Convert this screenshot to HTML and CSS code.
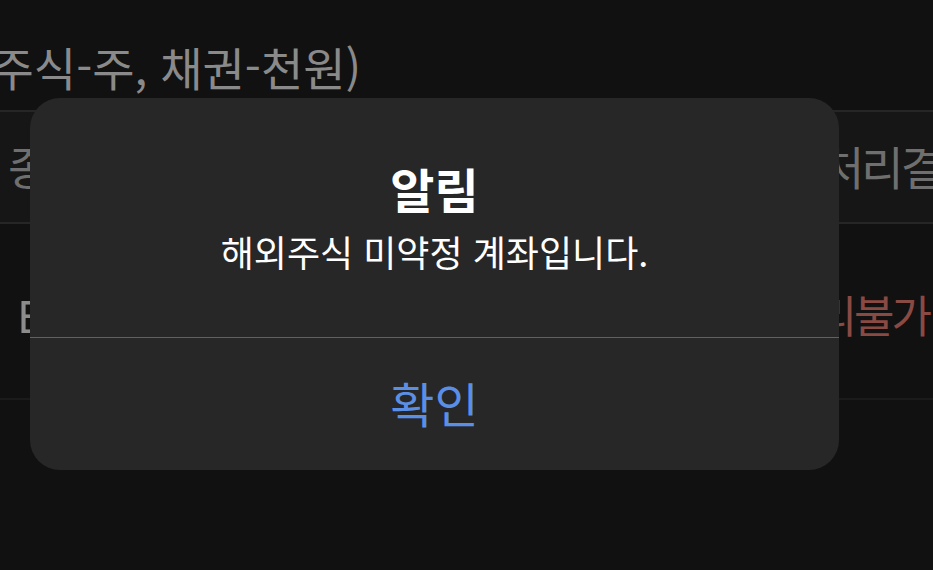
FILE: index.html
```html
<!DOCTYPE html>
<html lang="ko">
<head>
<meta charset="utf-8">
<title>알림</title>
<link rel="stylesheet" href="styles.css">
</head>
<body>
<div class="page">
  <div class="unit-line"><span class="unit-text">(주식-주, 채권-천원)</span></div>
  <div class="table-head">
    <div class="cell-left">종목명</div>
    <div class="cell-right">처리결과</div>
  </div>
  <div class="table-row">
    <div class="cell-left row-name">EWY</div>
    <div class="cell-right row-status">처리불가</div>
  </div>
</div>

<div class="alert">
  <div class="alert-body">
    <div class="alert-title">알림</div>
    <div class="alert-message">해외주식 미약정 계좌입니다.</div>
  </div>
  <div class="alert-button">확인</div>
</div>
</body>
</html>
```

FILE: styles.css
```css
html, body {
  margin: 0;
  padding: 0;
}

body {
  width: 933px;
  height: 570px;
  overflow: hidden;
  background: #111111;
  font-family: "Noto Sans CJK KR", "Noto Sans", sans-serif;
  position: relative;
}

.page {
  display: flex;
  flex-direction: column;
}

.unit-line {
  height: 110px;
  display: flex;
  align-items: center;
  box-sizing: border-box;
  padding-top: 22px;
}

.unit-text {
  font-size: 46px;
  letter-spacing: 0;
  color: #8a8a8a;
  white-space: nowrap;
  margin-left: -24px;
  line-height: 1;
}

.table-head {
  height: 114px;
  box-sizing: border-box;
  border-top: 2px solid #262626;
  border-bottom: 2px solid #262626;
  background: #161616;
  display: flex;
  align-items: center;
  color: #6f6f6f;
  font-size: 46px;
  letter-spacing: -3px;
  padding-bottom: 4px;
}

.cell-left {
  flex: 1;
  padding-left: 8px;
  white-space: nowrap;
}

.cell-right {
  width: 111px;
  white-space: nowrap;
  overflow: visible;
}

.table-row {
  height: 176px;
  box-sizing: border-box;
  border-bottom: 2px solid #1b1b1b;
  display: flex;
  align-items: center;
  font-size: 44px;
  letter-spacing: -3px;
  padding-top: 6px;
}

.row-name {
  color: #8c8c8c;
  padding-left: 17px;
}

.row-status {
  width: 180px;
  text-align: right;
  padding-right: 4px;
  color: #8a4a44;
}

.alert {
  position: absolute;
  left: 30px;
  top: 98px;
  width: 809px;
  height: 372px;
  border-radius: 30px;
  background: #272727;
  display: flex;
  flex-direction: column;
  overflow: hidden;
}

.alert-body {
  height: 240px;
  box-sizing: border-box;
  border-bottom: 1px solid #616161;
  display: flex;
  flex-direction: column;
  align-items: center;
  padding-top: 60px;
}

.alert-title {
  font-size: 48px;
  font-weight: 700;
  line-height: 60px;
  color: #ffffff;
}

.alert-message {
  font-size: 36px;
  line-height: 46px;
  margin-top: 10px;
  color: #ffffff;
}

.alert-button {
  flex: 1;
  display: flex;
  align-items: center;
  justify-content: center;
  font-size: 48px;
  color: #5b8fe6;
  padding-bottom: 4px;
}
```
